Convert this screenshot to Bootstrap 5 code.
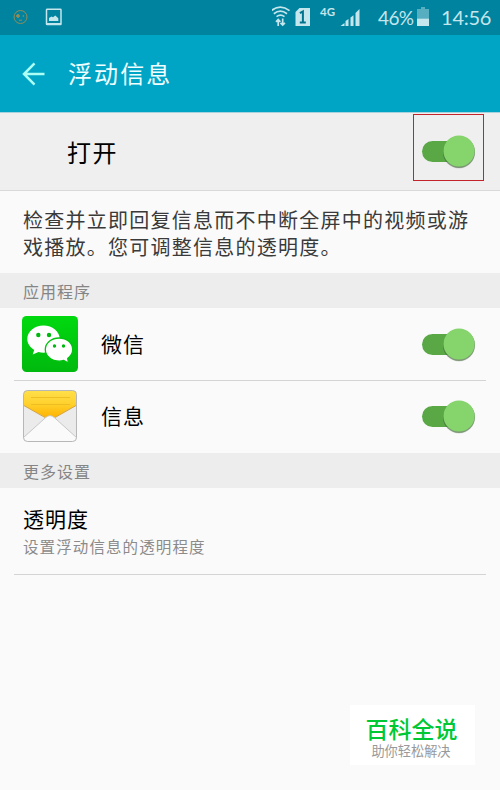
<!DOCTYPE html>
<html lang="zh-CN">
<head>
<meta charset="utf-8">
<meta name="viewport" content="width=device-width, initial-scale=1">
<title>浮动信息</title>
<link href="https://cdn.jsdelivr.net/npm/bootstrap@5.3.0/dist/css/bootstrap.min.css" rel="stylesheet">
<style>
body{background:#fafafa;color:#000;font-family:"Noto Sans CJK SC",sans-serif;height:790px;overflow:hidden}
svg{display:block;flex:none}
.status-strip{height:35px;background:#00839f;color:#c5e6ed;font-family:Lato,sans-serif;padding:0 9px 0 12px}
.status-num{line-height:35px;white-space:nowrap}
.battery-level{width:38px;margin-left:14px;font-size:19px;letter-spacing:-.6px}
.clock{width:59px;font-size:20px;letter-spacing:-.3px}
.network-type{width:22px;font-size:11.5px;line-height:23px;padding-left:2px}
.app-header{height:78px;background:#00a5c6;border-bottom:1px solid #a9d3dc;padding-left:22px}
.app-title{font-size:24px;letter-spacing:2.1px;line-height:30px;color:#f0ffff;margin:0 0 2px 22px;font-weight:400}
.master-row{height:78px;background:#efefef;border-bottom:1px solid #d9d9d9;padding-left:67px}
.master-label{font-size:24px;letter-spacing:1.6px}
.switch-frame{width:71px;height:67px;border:1px solid #c3242b;margin:1px 16px 0 0;padding:6px 0 0 7px}
.intro{height:82px;padding:15px 0 0 23px;font-size:20px;letter-spacing:1.25px;line-height:27px;color:#3a3a3a;white-space:nowrap}
.section-head{height:35px;background:#ededed;color:#858585;font-size:16px;letter-spacing:1px;line-height:36px;padding-left:23px}
.app-row{height:72px;margin:0 14px;padding:0 9px 3px 8px}
.app-row.ruled{height:73px;padding-bottom:0}
.ruled{border-bottom:1px solid #d4d4d4}
.app-name{font-size:21px;letter-spacing:1px;margin-left:23px}
.opacity-row{height:87px;margin:0 14px;padding:15px 0 0 9px}
.row-title{font-size:21px;letter-spacing:1px;line-height:30px}
.row-note{font-size:15.5px;letter-spacing:1.1px;line-height:24px;color:#8b8b8b;margin-top:1px}
.brand-box{position:absolute;left:350px;top:705px;width:125px;height:60px;background:#fff;padding:8px 0 0}
.brand-name{font-size:23px;line-height:30px;font-weight:500;color:#00c834;padding-right:2px}
.brand-note{font-size:13.2px;line-height:16px;color:#999;padding-right:3px}
</style>
<script src="https://cdn.jsdelivr.net/npm/bootstrap@5.3.0/dist/js/bootstrap.bundle.min.js"></script>
</head>
<body>
<svg width="0" height="0" class="position-absolute"><defs>
<symbol id="toggle" viewBox="0 0 56 38"><rect x="1" y="9" width="42" height="21" rx="10.5" fill="#5aa845"/><circle cx="38" cy="20.5" r="16" fill="#000" opacity=".13"/><circle cx="38" cy="20" r="16" fill="#4c7440" opacity=".65"/><circle cx="38" cy="19" r="15.6" fill="#86d46c"/></symbol>
</defs></svg>

<div class="status-strip d-flex align-items-center">
  <svg width="52" height="35" viewBox="12 0 52 35" fill="none">
    <g stroke="#958c56"><circle cx="20.5" cy="17" r="6.5"/><circle cx="18" cy="16" r="1.4" fill="#958c56"/><circle cx="23.3" cy="16" r=".5"/><path d="M19 20.2h3"/></g>
    <rect x="46.5" y="9.3" width="14.5" height="15.3" rx=".6" stroke="#c5e6ed" stroke-width="1.5"/><path d="M46 23h15v2H46zM49 21v-3l2.500-1.600 1.500.8 2.300-1.700 3 2.800V21z" fill="#c5e6ed"/>
  </svg>
  <svg class="ms-auto" width="46" height="35" viewBox="271.500 0 46 35">
    <g fill="none" stroke="#c5e6ed" stroke-width="1.700"><path d="M270.800 10.600q9-7 18.200 0M273.300 13.700q6.600-5 13.200 0M276 16.600q4-2.900 8 0"/><path d="M277.700 26v-6M282.200 18.500v6M275.500 21.800l2.200-2.300 2.200 2.300M280 22.800l2.200 2.300 2.200-2.300"/></g>
    <path d="M299 8h10.500v18H295V12z" fill="#c5e6ed"/><path d="M299.400 13.200l3-1.800v11.200M299.300 22.600h6" fill="none" stroke="#00738e" stroke-width="2"/>
  </svg>
  <span class="network-type fw-bold align-self-start">4G</span>
  <svg width="24" height="35" viewBox="339.500 0 24 35" fill="#c5e6ed"><path d="M340 26l4-3v3zM345 26v-5l3-2v7zM350 26v-8.500l3-2.300V26zM355 13l4-4v17h-4z"/></svg>
  <span class="status-num battery-level">46%</span>
  <svg width="16" height="35" viewBox="416 0 16 35"><path d="M417 9h4V7h4v2h4v9.500h-12z" fill="#58aec1"/><path d="M417 18.500h12V26h-12z" fill="#c5e6ed"/></svg>
  <span class="status-num clock text-end">14:56</span>
</div>

<header class="app-header d-flex align-items-center">
  <svg width="24" height="26" viewBox="22 61 24 26"><path d="M44.500 74H24M34.500 63.300L24 74l10.500 10.700" fill="none" stroke="#acfff4" stroke-width="2.500"/></svg>
  <h1 class="app-title">浮动信息</h1>
</header>

<main>
  <div class="master-row d-flex align-items-start justify-content-between">
    <span class="master-label align-self-center">打开</span>
    <div class="switch-frame d-flex align-items-center"><svg width="56" height="38"><use href="#toggle"/></svg></div>
  </div>
  <p class="intro mb-0">检查并立即回复信息而不中断全屏中的视频或游<br>戏播放。您可调整信息的透明度。</p>

  <div class="section-head">应用程序</div>
  <div class="app-row ruled d-flex align-items-center">
    <svg width="56" height="56" viewBox="0 0 56 56"><defs><linearGradient id="g" x2="0" y2="1"><stop stop-color="#00d90f"/><stop offset="1" stop-color="#00b90e"/></linearGradient></defs><rect width="56" height="56" rx="4.500" fill="url(#g)"/>
      <path d="M21.500 9.500c9 0 16.200 6 16.200 13.600S30.500 36.700 21.500 36.700q-2.600 0-5-.8L10.700 38.500l1.500-4.600C8 31.300 5.300 27.600 5.300 23.100 5.300 15.500 12.500 9.500 21.500 9.500z" fill="#fff"/>
      <circle cx="16.300" cy="19" r="2.200" fill="#00b80f"/><circle cx="27" cy="19" r="2.200" fill="#00b80f"/>
      <path d="M37.200 22c7.700 0 13.500 5 13.500 11.600 0 3.700-2 6.800-5 8.900l.8 4.500-4.800-2.600q-2.200.8-4.500.8c-7.700 0-13.900-5-13.900-11.600S29.500 22 37.200 22z" fill="#fff" stroke="#00c20f" stroke-width="1.300"/><circle cx="32.500" cy="30" r="1.700" fill="#00b80f"/><circle cx="41.500" cy="30" r="1.700" fill="#00b80f"/></svg>
    <span class="app-name">微信</span>
    <svg class="ms-auto" width="56" height="38"><use href="#toggle"/></svg>
  </div>
  <div class="app-row d-flex align-items-center">
    <svg width="56" height="56" viewBox="0 0 56 56"><defs><linearGradient id="y" x2="0" y2="1"><stop stop-color="#ffe04b"/><stop offset=".5" stop-color="#ffd12e"/><stop offset="1" stop-color="#ffb300"/></linearGradient><clipPath id="c"><rect x="1.500" y="2.500" width="53" height="51" rx="4"/></clipPath></defs>
      <g clip-path="url(#c)"><path d="M1 2h54v52H1z" fill="#ebebeb"/><path d="M1 2h54v15L32.500 29.500H23.500L1 17z" fill="url(#y)"/><path d="M1 17l22 12.500M55 17L33 29.500" stroke="#d2a345" fill="none"/><path d="M9 9.500h39M9 16.500h39" stroke="#e9b91f" stroke-width=".8"/><path d="M1 50l22.500-20.300q4.500-4.200 9 0L55 50v5H1z" fill="#fafafa" stroke="#bdbdbd" stroke-width=".8"/></g><rect x="1.500" y="2.500" width="53" height="51" rx="4" fill="none" stroke="#b7b7b7"/></svg>
    <span class="app-name">信息</span>
    <svg class="ms-auto" width="56" height="38"><use href="#toggle"/></svg>
  </div>

  <div class="section-head">更多设置</div>
  <div class="opacity-row ruled">
    <div class="row-title">透明度</div>
    <div class="row-note">设置浮动信息的透明程度</div>
  </div>
</main>

<aside class="brand-box text-center"><div class="brand-name">百科全说</div><div class="brand-note">助你轻松解决</div></aside>
</body>
</html>
